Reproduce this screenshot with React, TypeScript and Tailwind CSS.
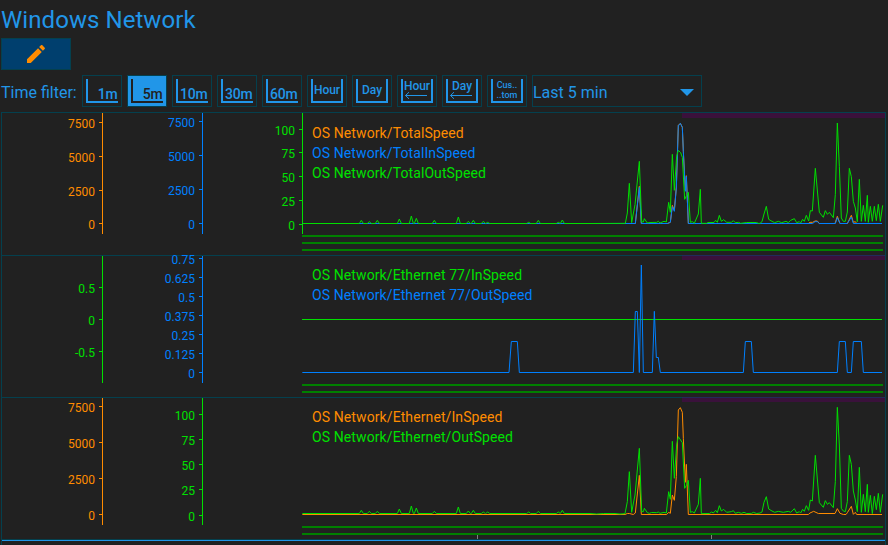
import React from "react";

const ORANGE = "#ff8c00";
const BLUE = "#0080ff";
const GREEN = "#00e000";

type Axis = { x: number; color: string; ticks: [number, string][] };
type Series = { color: string; points: string };
type Panel = {
  top: number;
  height: number;
  axisEnd: number;
  axes: Axis[];
  legendY: number;
  legend: [string, string][];
  series: Series[];
  bars: number[];
};

// Samples are stored at three units per pixel, relative to an origin.
function trace(ox: number, oy: number, data: string): string {
  return data
    .trim()
    .split(/\s+/)
    .map((p) => {
      const [x, y] = p.split(",").map(Number);
      return `${(ox + x / 3).toFixed(2)},${(oy + y / 3).toFixed(2)}`;
    })
    .join(" ");
}

// Small triangular blips on a flat base line.
function blips(ox: number, oy: number, base: number, peaks: [number, number][]): string {
  const out: string[] = [`22,${base}`];
  peaks.forEach(([x, y]) => out.push(`${x - 6},${base}`, `${x},${y}`, `${x + 6},${base}`));
  return trace(ox, oy, out.join(" "));
}

const totalOut =
  blips(295, 108, 346.5, [
    [199, 337], [223, 341], [247, 337], [313, 333], [349, 324], [364, 331], [418, 337], [490, 327],
    [520, 340], [535, 337], [565, 340], [578, 343], [701, 343], [730, 337], [790, 343], [802, 336],
  ]) +
  " " +
  trace(590, 108, `0,346.5 106,346 112,315 118,226 125,344 135,290 148,160 155,342 160,342 163,332 172,345 180,343.5 200,343 205,340 210,345 222,340 229,342
  236,283 241,313 247,139 253,247 260,145 265,127 272,134 277,148 284,274 290,262 295,253 301,343 307,341 313,346 325,318 331,244 334,346
  350,346 354,343.5 372,343.5 377,337 382,343 388,322 394,340 401,335 410,343 424,343 430,338 436,344 446,343 452,346 470,343.5 500,343.5 505,346 510,346 516,341 522,318 529,295 536,334 546,340
  554,344 565,340 575,344 588,340 595,344 602,337 613,332 620,344 628,341 632,345 638,334 643,340 649,322 656,339 661,308 667,309 676,181 688,313
  700,328 706,308 712,319 718,313 730,329 736,260 742,45 748,175 754,330 760,340 766,340 772,312 778,181 784,206 790,280 796,300 802,341
  808,214 814,340 820,292 826,340 832,262 835,343 841,295 847,340 853,295 859,338 865,289 871,340 878,292`);

const ethernetOut =
  blips(295, 395, 355.5, [
    [199, 346], [223, 349], [247, 349], [313, 342], [349, 333], [364, 339], [418, 349], [490, 336],
    [520, 348], [535, 346], [565, 351], [578, 351], [701, 351], [730, 349], [790, 351], [802, 346],
  ]) +
  " " +
  trace(590, 395, `0,355.5 20,357 40,355.5 75,355.5 90,357 105,356 112,320 118,230 125,352 135,300 148,160 155,350 160,350 163,340 172,353 178,355 185,352.5 200,353 205,351 210,355 222,352 229,354
  236,290 241,313 247,139 253,250 260,150 265,125 277,143 284,280 290,270 295,256 301,352 307,350 313,354 325,328 331,250 334,356
  358,355.5 365,351 370,354 377,346 382,353 388,332 394,348 401,343 410,352 424,350 430,347 436,355 445,352 454,355 462,352 470,355.5 485,355 490,352 500,355.5 510,354 516,351 522,322 529,305 536,342 546,348
  554,352 565,349 580,352 595,349 602,352 613,341 620,354 628,350 632,354 638,343 643,349 649,332 656,346 661,315 667,318 676,181 688,323
  700,337 706,317 712,328 718,323 730,338 736,260 742,37 748,150 754,340 760,348 766,350 772,320 778,181 784,208 790,288 796,315 802,350
  808,217 814,352 820,298 826,350 832,268 835,352 841,301 847,356 853,304 859,344 865,295 871,352 878,298`);

const panels: Panel[] = [
  {
    top: 113,
    height: 142,
    axisEnd: 234,
    axes: [
      { x: 102, color: ORANGE, ticks: [[122, "7500"], [156, "5000"], [190, "2500"], [223, "0"]] },
      { x: 202, color: BLUE, ticks: [[121, "7500"], [155, "5000"], [189, "2500"], [223, "0"]] },
      { x: 302, color: GREEN, ticks: [[129, "100"], [152, "75"], [176, "50"], [200, "25"], [224, "0"]] },
    ],
    legendY: 138,
    legend: [
      [ORANGE, "OS Network/TotalSpeed"],
      [BLUE, "OS Network/TotalInSpeed"],
      [GREEN, "OS Network/TotalOutSpeed"],
    ],
    series: [
      {
        color: ORANGE,
        points: trace(590, 108, `-863,346.5 136,346.5 148,235 154,346.5 232,346.5 241,343 247,292 253,307 259,237 265,52 271,46 277,58 280,130 286,247 289,203 295,346.5
        655,346.5 660,343 668,343 675,339 682,339 688,346.5 735,346.5 742,325 750,346.5 772,346.5 784,322 790,343 796,341 800,346.5 876,346.5`),
      },
      {
        color: BLUE,
        points: trace(590, 108, `-863,346.5 136,346.5 148,238 154,346.5 232,346.5 241,343 247,296 253,310 259,240 265,52 268,51 271,46 277,58 280,130 286,250 289,205 295,346.5
        668,346.5 675,341 682,341 688,346.5 736,346.5 742,329 750,346.5 772,346.5 784,327 790,346.5 876,346.5`),
      },
      { color: GREEN, points: totalOut },
    ],
    bars: [235, 242, 249],
  },
  {
    top: 256,
    height: 141,
    axisEnd: 383,
    axes: [
      { x: 102, color: GREEN, ticks: [[287, "0.5"], [319, "0"], [351, "-0.5"]] },
      {
        x: 202,
        color: BLUE,
        ticks: [[258, "0.75"], [277, "0.625"], [296, "0.5"], [315, "0.375"], [334, "0.25"], [353, "0.125"], [372, "0"]],
      },
    ],
    legendY: 280,
    legend: [
      [GREEN, "OS Network/Ethernet 77/InSpeed"],
      [BLUE, "OS Network/Ethernet 77/OutSpeed"],
    ],
    series: [
      { color: GREEN, points: "302,319.5 882,319.5" },
      {
        color: BLUE,
        points: trace(590, 250, `-863,367.5 -243,367.5 -236,274.5 -218,274.5 -212,367.5 130,367.5 136,184.5 142,184.5 148,367.5 154,45 160,367.5 187,367.5 193,184 199,322.5 205,322.5 211,367.5
        460,367.5 466,274.5 484,274.5 490,367.5 742,367.5 748,274.5 766,274.5 772,367.5 784,367.5 790,274.5 814,274.5 820,367.5 876,367.5`),
      },
    ],
    bars: [384, 391],
  },
  {
    top: 398,
    height: 141,
    axisEnd: 525,
    axes: [
      { x: 102, color: ORANGE, ticks: [[406, "7500"], [442, "5000"], [478, "2500"], [514, "0"]] },
      { x: 202, color: GREEN, ticks: [[414, "100"], [439, "75"], [464, "50"], [489, "25"], [515, "0"]] },
    ],
    legendY: 422,
    legend: [
      [ORANGE, "OS Network/Ethernet/InSpeed"],
      [GREEN, "OS Network/Ethernet/OutSpeed"],
    ],
    series: [
      {
        color: ORANGE,
        points: trace(590, 395, `-863,358.5 105,358.5 112,355.5 118,355.5 130,358.5 136,354 148,241 154,358.5 230,358.5 236,352 241,355 247,300 253,316 259,245 265,45 271,38 277,52 280,130 286,262 289,208 295,358.5
        655,358.5 660,354 671,349 685,355.5 735,355.5 742,341 750,355 760,358.5 768,358.5 772,353 784,334 790,358 796,352 800,358.5 876,358.5`),
      },
      { color: GREEN, points: ethernetOut },
    ],
    bars: [526, 533],
  },
];

function ChartPanel({ panel, last }: { panel: Panel; last?: boolean }) {
  return (
    <div className="border-t border-[#04404e]">
      <svg
        width={883}
        height={panel.height}
        viewBox={`2 ${panel.top} 883 ${panel.height}`}
        className="block overflow-visible"
      >
        <rect x={682} y={panel.top} width={203} height={panel.top === 113 ? 5 : 4} fill="#3a113b" />
        {panel.top !== 113 && <rect x={682} y={panel.top - 1} width={203} height={1} fill="#22295a" />}
        {panel.axes.map((a) => (
          <g key={a.x} fill={a.color}>
            <rect x={a.x} y={panel.top} width={1} height={panel.axisEnd - panel.top} />
            {a.ticks.map(([y, label]) => (
              <React.Fragment key={label}>
                <rect x={a.x - 3} y={y} width={3} height={1} />
                <text x={a.x - 7} y={y + 6} textAnchor="end" fontSize={12}>
                  {label}
                </text>
              </React.Fragment>
            ))}
          </g>
        ))}
        {panel.legend.map(([color, label], i) => (
          <text key={label} x={312} y={panel.legendY + i * 20} fontSize={14} fill={color} className="tracking-[0.1px]">
            {label}
          </text>
        ))}
        {panel.series.map((s) => (
          <polyline key={s.color} points={s.points} fill="none" stroke={s.color} strokeWidth={1} strokeLinejoin="bevel" />
        ))}
        {panel.bars.map((y) => (
          <rect key={y} x={302} y={y} width={581} height={2} fill="#008000" />
        ))}
        {last && (
          <g fill="#808080">
            <rect x={477} y={535} width={1} height={4} />
            <rect x={711} y={535} width={1} height={4} />
          </g>
        )}
      </svg>
    </div>
  );
}

function FilterIcon({ kind, label }: { kind: string; label: string }) {
  const frame = kind === "minutes" ? "M1 0V23H32" : "M1 0V23H31V0";
  return (
    <svg width={32} height={24} viewBox="0 0 32 24" className="block overflow-visible">
      <path d={frame} fill="none" stroke="currentColor" strokeWidth={2} />
      <g fill="currentColor" className="font-medium">
        {kind === "minutes" && (
          <text x={31.5} y={20} fontSize={14} textAnchor="end" className="tracking-[-0.2px]">{label}</text>
        )}
        {kind === "span" && (
          <text x={16} y={15} fontSize={12} textAnchor="middle">{label}</text>
        )}
        {kind === "back" && (
          <>
            <text x={16} y={11} fontSize={12} textAnchor="middle">{label}</text>
            <path d="M26 16.5H4.5M8 13.2L4.5 16.5L8 19.8" fill="none" stroke="currentColor" strokeWidth={1} />
          </>
        )}
        {kind === "custom" && (
          <>
            <text x={16} y={9} fontSize={9} textAnchor="middle">Cus..</text>
            <text x={16} y={19} fontSize={9} textAnchor="middle">..tom</text>
          </>
        )}
      </g>
    </svg>
  );
}

const filters: [string, string][] = [
  ["minutes", "1m"],
  ["minutes", "5m"],
  ["minutes", "10m"],
  ["minutes", "30m"],
  ["minutes", "60m"],
  ["span", "Hour"],
  ["span", "Day"],
  ["back", "Hour"],
  ["back", "Day"],
  ["custom", "Custom"],
];

export default function App() {
  return (
    <div className="flex h-[545px] w-[888px] flex-col overflow-hidden bg-[#212121] font-[Roboto,sans-serif] text-[#2196e8]">
      <h1 className="h-[38px] pl-px text-2xl leading-[40px] tracking-[0.06px]">Windows Network</h1>
      <button className="ml-px flex h-8 w-[70px] shrink-0 items-center justify-center border border-[#04404e] bg-[#003f6e]">
        <svg width={24} height={24} viewBox="0 0 24 24" fill="#ff8c00">
          <path d="M3 17.25V21h3.75L17.81 9.94l-3.75-3.75L3 17.25zM20.71 7.04c.39-.39.39-1.02 0-1.41l-2.34-2.34c-.39-.39-1.02-.39-1.41 0l-1.83 1.83 3.75 3.75 1.83-1.83z" />
        </svg>
      </button>
      <div className="mt-[5px] flex h-8 shrink-0 items-center gap-[5px] pl-px">
        <span className="w-[76px] whitespace-nowrap pt-1 text-base">Time filter:</span>
        {filters.map(([kind, label], i) => (
          <button
            key={i}
            className={`flex h-8 w-10 shrink-0 items-center justify-center border border-[#04404e] ${
              i === 1 ? "bg-[#2196e8] text-[#212121]" : ""
            }`}
          >
            <FilterIcon kind={kind} label={label} />
          </button>
        ))}
        <div className="flex h-8 w-[170px] items-center justify-between border border-[#04404e] pr-[7px]">
          <span className="pt-1 text-base">Last 5 min</span>
          <svg width={14} height={7} viewBox="0 0 14 7" fill="currentColor" className="mt-0.5">
            <path d="M0 0H14L7 7Z" />
          </svg>
        </div>
      </div>
      <div className="ml-px mt-[5px] h-[433px] w-[885px] shrink-0 border-x border-[#04404e]">
        {panels.map((p, i) => (
          <ChartPanel key={p.top} panel={p} last={i === 2} />
        ))}
        <div className="h-0.5 border-t border-[#04404e] bg-[#2196e8]" />
      </div>
    </div>
  );
}
